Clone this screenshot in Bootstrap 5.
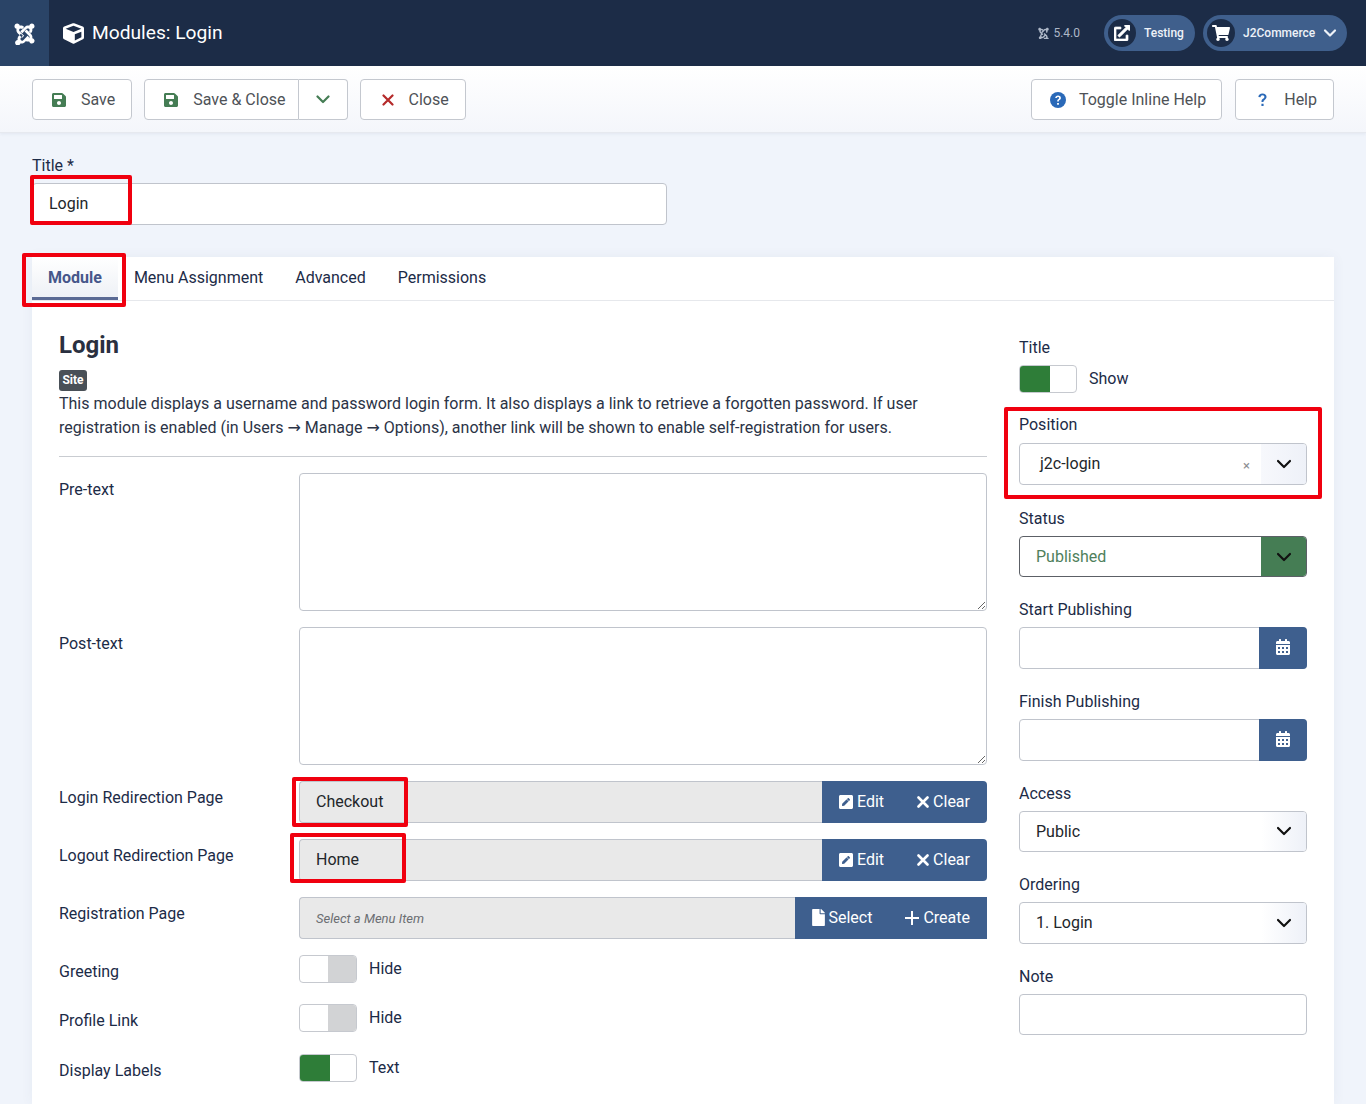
<!DOCTYPE html>
<html lang="en">
<head>
<meta charset="utf-8">
<title>Modules: Login</title>
<link href="https://cdn.jsdelivr.net/npm/bootstrap@5.3.0/dist/css/bootstrap.min.css" rel="stylesheet">
<script src="https://cdn.jsdelivr.net/npm/bootstrap@5.3.0/dist/js/bootstrap.bundle.min.js"></script>
<style>
html,body{overflow-x:hidden}
body{font-family:Roboto,"DejaVu Sans",sans-serif;font-size:16px;line-height:24px;background:#f0f4fb;color:#1c2b47}
svg{fill:currentColor;display:block;flex:none}
.chev{fill:none;stroke:currentColor;stroke-width:2.2;stroke-linecap:round;stroke-linejoin:round}

.top-bar{height:66px;background:#1c2c47;color:#fff}
.logo-box{width:49px;height:66px;background:#2a4467}
.cube-ico{margin-left:14px}
.page-name{font-size:19.2px;line-height:24px}
.ver{font-size:12px;color:#aeb8c8}
.pill{height:36px;border-radius:18px;background:#3f5f8c;font-size:12px;font-weight:500;color:#eef2f8}
.pill-ico{width:28px;height:28px;border-radius:50%;background:#1c2c47;color:#fff;margin-left:4px}
.pill-test{width:91px}
.pill-user{width:144px;margin:0 19px 0 8px}
.pill-name{margin-left:8px}
.ext-ico{stroke:currentColor;stroke-width:22}

.tool-bar{height:67px;padding:13px 32px;background:linear-gradient(#fff,#f4f6fb);border-bottom:1px solid #e6e9ef;box-shadow:0 1px 3px rgba(60,80,120,.08)}
.tool-btn{height:41px;padding:0 16px;background:#fff;border:1px solid #c4c8cf;border-radius:4px;color:#4e5257;font-size:16px;line-height:24px}
.tool-ico{width:32px;padding-left:3px}
.tool-ico-x{padding-left:5px}
.tool-ico-q{padding-left:6px}
.tool-ico-h{width:31px;padding-left:2px}
.tool-btn-h{padding-right:15px}
.tool-split{border-radius:4px 0 0 4px;padding-right:12px}
.tool-drop{width:49px;border-left:0;border-radius:0 4px 4px 0;padding:0;color:#457d54}
.tool-gap{margin-left:12px}
.tool-gap-r{margin-left:13px}
.c-save{color:#457d54}.c-close{color:#b52a2a}.c-help{color:#2a69b8}

.body-wrap{padding:20px 32px 0}
.ctl{height:41.6px;border:1px solid #c0c4cc;border-radius:4px;background:#fff;padding:0 16px;color:#22262a;line-height:40px;font-size:16px}
.lbl-line{display:block;margin:0 0 4px;line-height:26px}
.title-wrap{width:635px;margin-bottom:32px}

.hl{position:absolute;border:4px solid #f0000f;border-radius:2px;pointer-events:none;z-index:5}
.hl-title{left:-2px;top:-8px;width:102px;height:50px}
.hl-tab{left:-10px;top:-4px;width:104px;height:54px}
.hl-pos{left:-15px;top:-5px;width:318px;height:92px}
.hl-check{left:-7px;top:-4px;width:116px;height:50px}
.hl-home{left:-9px;top:-6px;width:116px;height:50px}

.sheet{background:#fff;box-shadow:0 0 12px rgba(60,80,120,.06);padding-bottom:22px}
.tab-row{height:44px;border-bottom:1px solid #e6e8ec}
.tab-link{display:block;height:43px;padding:9px 16px 0;color:#1c2b47;text-decoration:none}
.tab-on{font-weight:700;color:#46578a;background:linear-gradient(#fff,#eef1f6);border-bottom:3px solid #5a6a94;font-size:16px}
.sheet-grid{padding:0 27px;gap:32px}
.left-col{width:928px;padding-top:30px}
.right-col{width:288px;padding-top:34px}
.mod-name{font-size:24px;font-weight:700;line-height:29px;margin:0 0 10px;color:#2a3040}
.site-tag{display:block;width:28px;height:21px;background:#495057;color:#fff;font-size:12px;font-weight:700;line-height:21px;text-align:center;border-radius:3px;padding:0}
.mod-desc{margin:0;padding-top:1px;color:#2b3346}
.mod-rule{margin:16px 0;border:0;border-top:1px solid #c9ccd1;opacity:1}
.frow{display:flex;margin-bottom:16px}
.frow-lbl{width:240px;flex:none;padding-top:5px;margin:0}
.frow-ctl{width:688px;position:relative}
.big-area{display:block;width:100%;height:138px;border:1px solid #c0c4cc;border-radius:4px}
.ro{flex:1;height:42px;background:#e9e9e9;border:1px solid #c0c4cc;border-right:0;border-radius:4px 0 0 4px;padding:0 16px;line-height:40px;color:#22262a}
.ro-ph{font-size:13px;font-style:italic;color:#6b6e72;line-height:42px}
.act{height:42px;background:#3e5f8e;color:#fff;padding:0 17px;display:flex;align-items:center;gap:4px;border:0;border-radius:0;line-height:24px;font-size:16px}
.act-end{border-radius:0 4px 4px 0;padding-left:16px}
.act-flat{border-radius:0;padding-left:16px}
.act-sel{gap:3px}
.x-heavy{stroke-width:2.6}
.plus-ico{stroke-width:2}

.swi{width:58px;height:28px;border:1px solid #c6c9cf;border-radius:4px;background:#fff;overflow:hidden;flex:none}
.swi-on{width:30px;height:100%;background:#2e7d38}
.swi-off{width:28px;height:100%;margin-left:auto;background:#d2d3d5}
.swi-txt{margin-left:12px}
.frow-swi{margin-bottom:21.5px}
.frow-swi .frow-lbl{height:28px}

.rgroup{margin-bottom:20px;position:relative}
.rg-title{margin-bottom:19px}
.rg-pos{margin-bottom:20.8px}
.lbl-pos{margin:0}
.sel-box{display:flex;height:41.6px;border:1px solid #c0c4cc;border-radius:4px;background:#fff;overflow:hidden}
.sel-txt{flex:1;padding:0 16px;line-height:40px;color:#22262a}
.sel-arrow{width:45px;flex:none;color:#111;background:linear-gradient(90deg,#fff,#eef1f8)}
.sel-pos{height:42.4px;margin-top:5px}
.sel-pos .sel-txt{padding-left:20px;display:flex;justify-content:space-between}
.sel-pos .sel-arrow{background:linear-gradient(90deg,#f7f8fc,#eef1f8)}
.sel-x{font-size:13px;color:#8b8e92;margin-right:-5px;line-height:43px}
.sel-pub{border-color:#5c6066}
.sel-pub .sel-txt{color:#4f7f5c}
.sel-pub .sel-arrow{background:#457d54;color:#111}
.sel-cal{overflow:visible}
.cal-btn{width:48px;flex:none;background:#3e5f8e;color:#fff;margin:-1px -1px -1px 0;border-radius:0 4px 4px 0;padding-bottom:2px}
</style>
</head>
<body>

<header class="top-bar d-flex align-items-center">
  <div class="logo-box d-flex align-items-center justify-content-center">
    <svg width="21" height="23" viewBox="0 0 448 512"><path d="M.6 92.1C.6 58.8 27.4 32 60.4 32c30 0 54.5 21.9 59.2 50.2 32.6-7.6 67.1.6 96.5 30l-44.3 44.3c-20.5-20.5-42.6-16.3-55.4-3.5-14.3 14.3-14.3 37.9 0 52.2l99.5 99.5-44 44.3c-87.7-87.2-49.7-49.7-99.8-99.7-26.8-26.5-35-64.8-24.8-98.9C20.4 144.6.6 120.7.6 92.1zm129.5 116.4l44.3 44.3c10-10 89.7-89.7 99.7-99.8 14.3-14.3 37.6-14.3 51.9 0 12.8 12.8 17 35-3.5 55.4l44 44.3c31.2-31.2 38.5-67.6 28.9-101.2 29.2-4.1 51.9-29.2 51.9-59.5 0-33.2-26.8-60.1-59.8-60.1-30.3 0-55.4 22.5-59.5 51.6-33.8-9.9-71.7-1.5-98.3 25.1-18.3 19.1-71.1 71.5-99.6 99.9zm266.3 152.2c8.2-32.7-.9-68.5-26.3-93.9-11.8-12.2 5 4.7-99.5-99.7l-44.3 44.3 99.7 99.7c14.3 14.3 14.3 37.6 0 51.9-12.8 12.8-35 17-55.4-3.5l-44 44.3c27.6 30.2 68 38.8 102.7 28 5.5 27.4 29.7 48.1 58.9 48.1 33 0 59.8-26.8 59.8-60.1 0-30.2-22.5-55-51.6-58.9zM296 304.5c-10 10-89.7 89.7-99.7 99.8-16.6 16.6-39.4 13.2-51.9 0-14.3-14.3-14.3-37.6 0-51.9L188.4 308l-44.3-44.3c-19.5 19.5-24 24-44.3 44.3-32.7 32.7-35 70.1-28.3 93.2-32.9 5.1-57.1 31.3-57.1 63.1 0 33.2 26.8 60.1 59.8 60.1 28.6 0 52.5-19.9 58.7-46.8 34.5 8.5 71.1-1 97.4-27.4 35.3-35.3 60.3-60.8 99.8-99.7L296 304.5z"/></svg>
  </div>
  <svg class="cube-ico" width="21" height="21" viewBox="0 0 512 512"><path d="M239.1 6.3l-208 78c-18.7 7-31.1 25-31.1 45v225.1c0 18.2 10.3 34.8 26.5 42.9l208 104c13.5 6.8 29.4 6.8 42.9 0l208-104c16.3-8.1 26.5-24.8 26.5-42.9V129.3c0-20-12.4-37.9-31.1-44.9l-208-78C262 2.2 250 2.2 239.1 6.3zM256 68.4l192 72v1.1l-192 78-192-78v-1.1l192-72zm32 356V275.5l160-65v133.9l-160 80z"/></svg>
  <div class="page-name ms-2">Modules: Login</div>
  <div class="ms-auto d-flex align-items-center">
    <div class="ver d-flex align-items-center gap-1 me-4">
      <svg width="11" height="12" viewBox="0 0 448 512"><path d="M60 32c30 0 55 22 60 50 32-8 67 1 96 30l-44 44c-20-20-43-16-55-3-14 14-14 38 0 52l99 100-44 44L72 249C45 222 37 184 47 150 20 145 1 121 1 92 1 59 27 32 60 32zm328 0c33 0 60 27 60 60 0 30-23 55-52 60 10 33 2 70-29 101l-44-44c21-20 16-43 4-55-15-15-38-15-52 0L175 253l-45-45L230 108c27-26 65-35 98-25 4-29 29-51 60-51zM270 253l100 100c25 25 34 61 26 94 29 4 52 29 52 59 0 33-27 60-60 60-29 0-53-20-59-48-35 11-75 2-103-28l44-44c20 20 43 16 55 3 14-14 14-37 0-52l-99-100zM144 264l44 44-44 44c-14 14-14 38 0 52 13 13 35 17 52 0l100-100 44 44-100 100c-26 26-63 36-97 27-6 27-30 47-59 47-33 0-60-27-60-60 0-32 24-58 57-63-7-23-4-60 28-93z"/></svg>
      5.4.0
    </div>
    <div class="pill pill-test d-flex align-items-center">
      <span class="pill-ico d-flex align-items-center justify-content-center"><svg class="ext-ico" width="16" height="16" viewBox="0 0 512 512"><path d="M432 320h-32a16 16 0 0 0-16 16v112H64V128h144a16 16 0 0 0 16-16V80a16 16 0 0 0-16-16H48a48 48 0 0 0-48 48v352a48 48 0 0 0 48 48h352a48 48 0 0 0 48-48V336a16 16 0 0 0-16-16zM488 0H360c-21.37 0-32.05 25.91-17 41l35.73 35.73L135 320.37a24 24 0 0 0 0 34L157.67 377a24 24 0 0 0 34 0l243.61-243.68L471 169c15 15 41 4.5 41-17V24a24 24 0 0 0-24-24z"/></svg></span>
      <span class="ms-2">Testing</span>
    </div>
    <div class="pill pill-user d-flex align-items-center">
      <span class="pill-ico d-flex align-items-center justify-content-center"><svg width="18" height="16" viewBox="0 0 576 512"><path d="M528.12 301.319l47.273-208C578.806 78.301 567.391 64 551.99 64H159.208l-9.166-44.81C147.758 8.021 137.93 0 126.529 0H24C10.745 0 0 10.745 0 24v16c0 13.255 10.745 24 24 24h69.883l70.248 343.435C147.325 417.1 136 435.222 136 456c0 30.928 25.072 56 56 56s56-25.072 56-56c0-15.674-6.447-29.835-16.824-40h209.647C430.447 426.165 424 440.326 424 456c0 30.928 25.072 56 56 56s56-25.072 56-56c0-22.172-12.888-41.332-31.579-50.405l5.517-24.276c3.413-15.018-8.002-29.319-23.403-29.319H218.117l-6.545-32h293.145c11.206 0 20.92-7.754 23.403-18.681z"/></svg></span>
      <span class="pill-name">J2Commerce</span>
      <svg class="chev ms-2" width="14" height="10" viewBox="0 0 14 10"><path d="M2 2.5l5 5 5-5"/></svg>
    </div>
  </div>
</header>

<div class="tool-bar d-flex align-items-start">
  <button class="btn tool-btn d-flex align-items-center"><span class="tool-ico c-save"><svg width="14" height="16" viewBox="0 0 448 512"><path d="M433.941 129.941l-83.882-83.882A48 48 0 0 0 316.118 32H48C21.49 32 0 53.49 0 80v352c0 26.51 21.49 48 48 48h352c26.51 0 48-21.49 48-48V163.882a48 48 0 0 0-14.059-33.941zM224 416c-35.346 0-64-28.654-64-64 0-35.346 28.654-64 64-64s64 28.654 64 64c0 35.346-28.654 64-64 64zm96-304.52V212c0 6.627-5.373 12-12 12H76c-6.627 0-12-5.373-12-12V108c0-6.627 5.373-12 12-12h228.52c3.183 0 6.235 1.264 8.485 3.515l3.48 3.48A11.996 11.996 0 0 1 320 111.48z"/></svg></span>Save</button>
  <div class="d-flex tool-gap">
    <button class="btn tool-btn tool-split d-flex align-items-center"><span class="tool-ico c-save"><svg width="14" height="16" viewBox="0 0 448 512"><path d="M433.941 129.941l-83.882-83.882A48 48 0 0 0 316.118 32H48C21.49 32 0 53.49 0 80v352c0 26.51 21.49 48 48 48h352c26.51 0 48-21.49 48-48V163.882a48 48 0 0 0-14.059-33.941zM224 416c-35.346 0-64-28.654-64-64 0-35.346 28.654-64 64-64s64 28.654 64 64c0 35.346-28.654 64-64 64zm96-304.52V212c0 6.627-5.373 12-12 12H76c-6.627 0-12-5.373-12-12V108c0-6.627 5.373-12 12-12h228.52c3.183 0 6.235 1.264 8.485 3.515l3.48 3.48A11.996 11.996 0 0 1 320 111.48z"/></svg></span>Save &amp; Close</button>
    <button class="btn tool-btn tool-drop d-flex align-items-center justify-content-center"><svg class="chev" width="14" height="9" viewBox="0 0 14 9"><path d="M1.500 1.500l5.500 5.500 5.500-5.500"/></svg></button>
  </div>
  <button class="btn tool-btn d-flex align-items-center tool-gap"><span class="tool-ico tool-ico-x c-close"><svg class="chev" width="12" height="12" viewBox="0 0 12 12"><path d="M1.500 1.500l9 9M10.500 1.500l-9 9"/></svg></span>Close</button>
  <button class="btn tool-btn tool-btn-h d-flex align-items-center ms-auto"><span class="tool-ico tool-ico-h c-help"><svg width="16" height="16" viewBox="0 0 16 16"><circle cx="8" cy="8" r="8"/><path fill="#fff" d="M5.200 6.100C5.300 4.500 6.500 3.600 8.100 3.600c1.600 0 2.800.9 2.800 2.300 0 1.100-.6 1.600-1.300 2.100-.6.4-.8.7-.8 1.300v.3H7.200v-.5c0-1 .4-1.400 1-1.900.5-.4.9-.7.9-1.200 0-.6-.5-1-1.100-1-.7 0-1.100.4-1.200 1.100zM7.100 11h1.800v1.700H7.100z"/></svg></span>Toggle Inline Help</button>
  <button class="btn tool-btn d-flex align-items-center tool-gap-r"><span class="tool-ico tool-ico-q c-help"><svg width="9" height="14" viewBox="0 0 10 15"><path d="M.4 4.200C.5 1.700 2.400.3 5 .3c2.600 0 4.500 1.500 4.500 3.700 0 1.800-1 2.600-2.100 3.400-.9.7-1.300 1.100-1.300 2v.4H3.900v-.7c0-1.500.7-2.200 1.600-2.900.8-.6 1.600-1.100 1.600-2 0-1-.8-1.900-2.100-1.900-1.300 0-2.100.9-2.200 2.100zM3.800 11.800h2.400v2.500H3.800z"/></svg></span>Help</button>
</div>

<main class="body-wrap">
  <label class="lbl-line">Title *</label>
  <div class="title-wrap position-relative">
    <div class="ctl form-control">Login</div>
    <span class="hl hl-title"></span>
  </div>

  <div class="sheet">
    <nav class="tab-row d-flex">
      <div class="position-relative"><a class="tab-link tab-on" href="#">Module</a><span class="hl hl-tab"></span></div>
      <a class="tab-link" href="#">Menu Assignment</a>
      <a class="tab-link" href="#">Advanced</a>
      <a class="tab-link" href="#">Permissions</a>
    </nav>
    <div class="sheet-grid d-flex align-items-start">
      <section class="left-col">
        <h2 class="mod-name">Login</h2>
        <span class="badge site-tag">Site</span>
        <p class="mod-desc">This module displays a username and password login form. It also displays a link to retrieve a forgotten password. If user registration is enabled (in Users → Manage → Options), another link will be shown to enable self-registration for users.</p>
        <hr class="mod-rule">

        <div class="frow"><label class="frow-lbl">Pre-text</label><div class="frow-ctl"><textarea class="big-area form-control"></textarea></div></div>
        <div class="frow"><label class="frow-lbl">Post-text</label><div class="frow-ctl"><textarea class="big-area form-control"></textarea></div></div>

        <div class="frow"><label class="frow-lbl">Login Redirection Page</label>
          <div class="frow-ctl d-flex">
            <div class="ro">Checkout</div>
            <button class="btn act"><svg width="14" height="16" viewBox="0 0 448 512"><path d="M400 480H48c-26.500 0-48-21.500-48-48V80c0-26.500 21.500-48 48-48h352c26.500 0 48 21.500 48 48v352c0 26.500-21.500 48-48 48zM238.100 177.900L102.400 313.600l-6.300 57.100c-.8 7.600 5.600 14.100 13.300 13.300l57.100-6.300L302.200 242c2.300-2.300 2.300-6.100 0-8.500L246.700 178c-2.500-2.400-6.300-2.400-8.600-.1zM345 165.100L314.900 135c-9.400-9.400-24.600-9.400-33.900 0l-23.100 23.100c-2.300 2.300-2.300 6.100 0 8.500l55.500 55.500c2.300 2.300 6.100 2.300 8.500 0L345 199c9.300-9.300 9.300-24.500 0-33.900z"/></svg>Edit</button>
            <button class="btn act act-end"><svg class="chev x-heavy" width="12" height="12" viewBox="0 0 12 12"><path d="M1.500 1.500l9 9M10.500 1.500l-9 9"/></svg>Clear</button>
            <span class="hl hl-check"></span>
          </div>
        </div>
        <div class="frow"><label class="frow-lbl">Logout Redirection Page</label>
          <div class="frow-ctl d-flex">
            <div class="ro">Home</div>
            <button class="btn act"><svg width="14" height="16" viewBox="0 0 448 512"><path d="M400 480H48c-26.500 0-48-21.500-48-48V80c0-26.500 21.500-48 48-48h352c26.500 0 48 21.500 48 48v352c0 26.500-21.500 48-48 48zM238.100 177.900L102.400 313.600l-6.300 57.100c-.8 7.600 5.600 14.100 13.300 13.300l57.100-6.300L302.200 242c2.300-2.300 2.300-6.100 0-8.500L246.700 178c-2.500-2.400-6.300-2.400-8.600-.1zM345 165.100L314.900 135c-9.400-9.400-24.600-9.400-33.900 0l-23.100 23.100c-2.300 2.300-2.300 6.100 0 8.500l55.500 55.500c2.300 2.300 6.100 2.300 8.500 0L345 199c9.300-9.300 9.300-24.500 0-33.900z"/></svg>Edit</button>
            <button class="btn act act-end"><svg class="chev x-heavy" width="12" height="12" viewBox="0 0 12 12"><path d="M1.500 1.500l9 9M10.500 1.500l-9 9"/></svg>Clear</button>
            <span class="hl hl-home"></span>
          </div>
        </div>
        <div class="frow"><label class="frow-lbl">Registration Page</label>
          <div class="frow-ctl d-flex">
            <div class="ro ro-ph">Select a Menu Item</div>
            <button class="btn act act-sel"><svg width="13" height="17" viewBox="0 0 384 512"><path d="M224 136V0H24C10.700 0 0 10.700 0 24v464c0 13.300 10.700 24 24 24h336c13.300 0 24-10.700 24-24V160H248c-13.200 0-24-10.800-24-24zm160-14.100v6.100H256V0h6.100c6.400 0 12.500 2.500 17 7l97.900 98c4.500 4.500 7 10.600 7 16.900z"/></svg>Select</button>
            <button class="btn act act-flat"><svg class="chev plus-ico" width="14" height="14" viewBox="0 0 14 14"><path d="M7 .5v13M.5 7h13"/></svg>Create</button>
          </div>
        </div>

        <div class="frow frow-swi"><label class="frow-lbl">Greeting</label><div class="frow-ctl d-flex align-items-center"><div class="swi"><div class="swi-off"></div></div><span class="swi-txt">Hide</span></div></div>
        <div class="frow frow-swi"><label class="frow-lbl">Profile Link</label><div class="frow-ctl d-flex align-items-center"><div class="swi"><div class="swi-off"></div></div><span class="swi-txt">Hide</span></div></div>
        <div class="frow frow-swi mb-0"><label class="frow-lbl">Display Labels</label><div class="frow-ctl d-flex align-items-center"><div class="swi"><div class="swi-on"></div></div><span class="swi-txt">Text</span></div></div>
      </section>

      <aside class="right-col">
        <div class="rgroup rg-title">
          <label class="lbl-line">Title</label>
          <div class="d-flex align-items-center"><div class="swi"><div class="swi-on"></div></div><span class="swi-txt">Show</span></div>
        </div>
        <div class="rgroup rg-pos">
          <label class="lbl-line lbl-pos">Position</label>
          <div class="sel-box sel-pos"><div class="sel-txt"><span>j2c-login</span><span class="sel-x">×</span></div><div class="sel-arrow d-flex align-items-center justify-content-center"><svg class="chev" width="16" height="10" viewBox="0 0 16 10"><path d="M2 2l6 6 6-6"/></svg></div></div>
          <span class="hl hl-pos"></span>
        </div>
        <div class="rgroup">
          <label class="lbl-line">Status</label>
          <div class="sel-box sel-pub"><div class="sel-txt">Published</div><div class="sel-arrow d-flex align-items-center justify-content-center"><svg class="chev" width="16" height="10" viewBox="0 0 16 10"><path d="M2 2l6 6 6-6"/></svg></div></div>
        </div>
        <div class="rgroup">
          <label class="lbl-line">Start Publishing</label>
          <div class="sel-box sel-cal"><div class="sel-txt"></div><div class="cal-btn d-flex align-items-center justify-content-center"><svg width="14" height="16" viewBox="0 0 448 512"><path d="M0 464c0 26.500 21.500 48 48 48h352c26.500 0 48-21.500 48-48V192H0v272zm320-196c0-6.600 5.400-12 12-12h40c6.600 0 12 5.400 12 12v40c0 6.600-5.400 12-12 12h-40c-6.600 0-12-5.400-12-12v-40zm0 128c0-6.600 5.400-12 12-12h40c6.600 0 12 5.400 12 12v40c0 6.600-5.400 12-12 12h-40c-6.600 0-12-5.400-12-12v-40zM192 268c0-6.600 5.400-12 12-12h40c6.600 0 12 5.400 12 12v40c0 6.600-5.400 12-12 12h-40c-6.600 0-12-5.400-12-12v-40zm0 128c0-6.600 5.400-12 12-12h40c6.600 0 12 5.400 12 12v40c0 6.600-5.400 12-12 12h-40c-6.600 0-12-5.400-12-12v-40zM64 268c0-6.600 5.400-12 12-12h40c6.600 0 12 5.400 12 12v40c0 6.600-5.400 12-12 12H76c-6.600 0-12-5.400-12-12v-40zm0 128c0-6.600 5.400-12 12-12h40c6.600 0 12 5.400 12 12v40c0 6.600-5.400 12-12 12H76c-6.600 0-12-5.400-12-12v-40zM400 64h-48V16c0-8.800-7.200-16-16-16h-32c-8.800 0-16 7.200-16 16v48H160V16c0-8.800-7.200-16-16-16h-32c-8.800 0-16 7.200-16 16v48H48C21.500 64 0 85.500 0 112v48h448v-48c0-26.500-21.500-48-48-48z"/></svg></div></div>
        </div>
        <div class="rgroup">
          <label class="lbl-line">Finish Publishing</label>
          <div class="sel-box sel-cal"><div class="sel-txt"></div><div class="cal-btn d-flex align-items-center justify-content-center"><svg width="14" height="16" viewBox="0 0 448 512"><path d="M0 464c0 26.500 21.500 48 48 48h352c26.500 0 48-21.500 48-48V192H0v272zm320-196c0-6.600 5.400-12 12-12h40c6.600 0 12 5.400 12 12v40c0 6.600-5.400 12-12 12h-40c-6.600 0-12-5.400-12-12v-40zm0 128c0-6.600 5.400-12 12-12h40c6.600 0 12 5.400 12 12v40c0 6.600-5.400 12-12 12h-40c-6.600 0-12-5.400-12-12v-40zM192 268c0-6.600 5.400-12 12-12h40c6.600 0 12 5.400 12 12v40c0 6.600-5.400 12-12 12h-40c-6.600 0-12-5.400-12-12v-40zm0 128c0-6.600 5.400-12 12-12h40c6.600 0 12 5.400 12 12v40c0 6.600-5.400 12-12 12h-40c-6.600 0-12-5.400-12-12v-40zM64 268c0-6.600 5.400-12 12-12h40c6.600 0 12 5.400 12 12v40c0 6.600-5.400 12-12 12H76c-6.600 0-12-5.400-12-12v-40zm0 128c0-6.600 5.400-12 12-12h40c6.600 0 12 5.400 12 12v40c0 6.600-5.400 12-12 12H76c-6.600 0-12-5.400-12-12v-40zM400 64h-48V16c0-8.800-7.200-16-16-16h-32c-8.800 0-16 7.200-16 16v48H160V16c0-8.800-7.200-16-16-16h-32c-8.800 0-16 7.200-16 16v48H48C21.500 64 0 85.500 0 112v48h448v-48c0-26.500-21.500-48-48-48z"/></svg></div></div>
        </div>
        <div class="rgroup">
          <label class="lbl-line">Access</label>
          <div class="sel-box"><div class="sel-txt">Public</div><div class="sel-arrow d-flex align-items-center justify-content-center"><svg class="chev" width="16" height="10" viewBox="0 0 16 10"><path d="M2 2l6 6 6-6"/></svg></div></div>
        </div>
        <div class="rgroup">
          <label class="lbl-line">Ordering</label>
          <div class="sel-box"><div class="sel-txt">1. Login</div><div class="sel-arrow d-flex align-items-center justify-content-center"><svg class="chev" width="16" height="10" viewBox="0 0 16 10"><path d="M2 2l6 6 6-6"/></svg></div></div>
        </div>
        <div class="rgroup mb-0">
          <label class="lbl-line">Note</label>
          <div class="sel-box"><div class="sel-txt"></div></div>
        </div>
      </aside>
    </div>
  </div>
</main>
</body>
</html>
